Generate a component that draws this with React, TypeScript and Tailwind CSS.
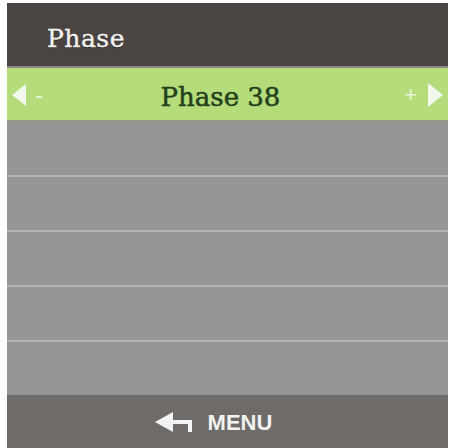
import React from "react";

const ROWS = 5;

function ReturnArrow() {
  return (
    <svg width="38" height="22" viewBox="0 0 38 22" className="shrink-0">
      <path d="M0 10 L18 0 L18 20 Z" fill="#f4f4f4" />
      <path d="M16 8 H37 V20 H33 V12 H16 Z" fill="#f4f4f4" />
    </svg>
  );
}

export default function App() {
  return (
    <div className="w-[451px] h-[448px] bg-white pl-[7px] pr-[3px] pt-[3px]">
      <div className="flex flex-col h-full bg-[#959595]">
        {/* title bar */}
        <div className="h-[63px] shrink-0 bg-[#4a4543] flex items-center pl-[40px] pt-[8px]">
          <span
            className="text-[25px] text-[#f2f2ee] leading-none tracking-[0.5px]"
            style={{
              fontFamily: '"DejaVu Serif", serif',
              WebkitTextStroke: "0.4px #f2f2ee",
              textShadow: "0 1px 1px rgba(0,0,0,0.5)",
            }}
          >
            Phase
          </span>
        </div>
        <div className="h-[2px] shrink-0 bg-[#8b8a86]" />

        {/* selected value row */}
        <div className="h-[52px] shrink-0 bg-[#b4dc7a] flex items-center px-[5px]">
          <div className="flex items-center gap-[9px] w-[40px] pt-[2px]">
            <div className="w-0 h-0 border-y-[11px] border-y-transparent border-r-[14px] border-r-[#f3f8ec]" />
            <span className="text-[#e6f3d4] text-[24px] leading-none" style={{ fontFamily: '"Liberation Sans", sans-serif' }}>
              -
            </span>
          </div>
          <div className="flex-1 text-center pr-[14px] pt-[8px]">
            <span
              className="text-[26px] leading-none text-[#22401a]"
              style={{ fontFamily: '"DejaVu Serif", serif', WebkitTextStroke: "0.5px #22401a" }}
            >
              Phase 38
            </span>
          </div>
          <div className="flex items-center justify-end gap-[11px] w-[40px] pt-[2px]">
            <span className="text-[#e6f3d4] text-[22px] leading-none" style={{ fontFamily: '"Liberation Sans", sans-serif' }}>
              +
            </span>
            <div className="w-0 h-0 border-y-[12px] border-y-transparent border-l-[15px] border-l-[#f3f8ec]" />
          </div>
        </div>
        <div className="h-[2px] shrink-0 bg-[#8f9a87]" />

        {/* empty rows */}
        <div className="flex-1 flex flex-col">
          {Array.from({ length: ROWS }).map((_, i) => (
            <React.Fragment key={i}>
              {i > 0 && <div className="h-[2px] shrink-0 bg-[#b3b3b3]" />}
              <div className="flex-1 bg-[#959595]" />
            </React.Fragment>
          ))}
        </div>

        {/* footer */}
        <div className="h-[53px] shrink-0 bg-[#6e6b69] flex items-center justify-center gap-[15px] pr-[28px] pt-[2px]">
          <ReturnArrow />
          <span
            className="text-[22px] font-bold text-[#f2f2f2] leading-none"
            style={{ fontFamily: '"Liberation Sans", Arial, sans-serif' }}
          >
            MENU
          </span>
        </div>
      </div>
    </div>
  );
}
